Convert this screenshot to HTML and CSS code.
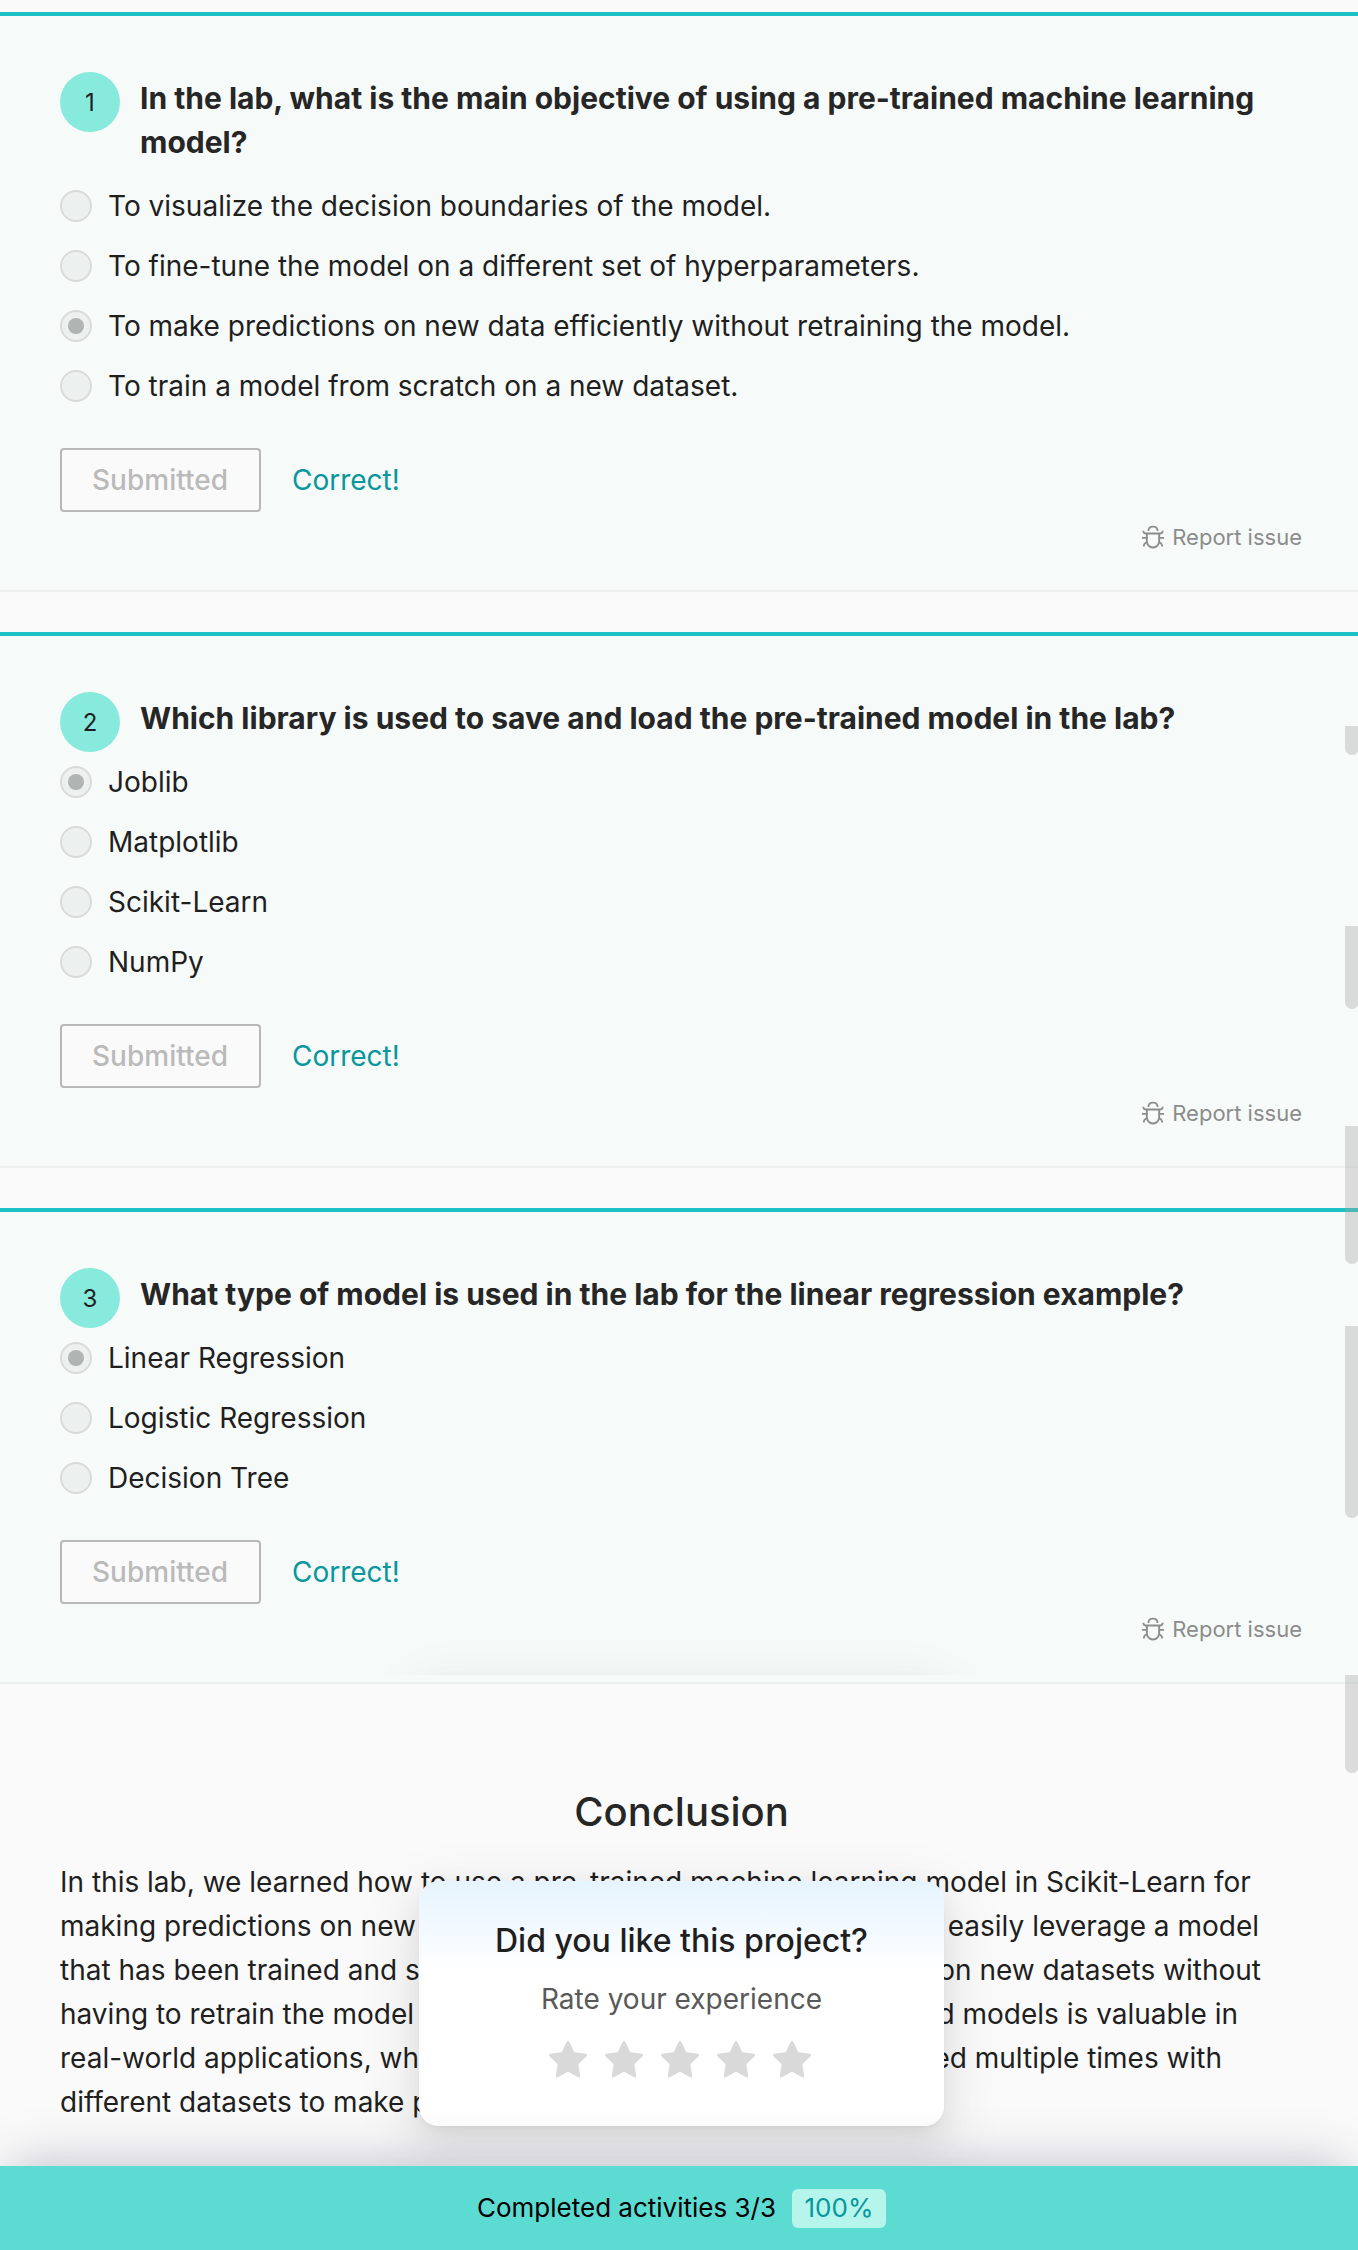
FILE: index.html
```html
<!DOCTYPE html>
<html lang="en">
<head>
<meta charset="utf-8">
<title>Lab quiz</title>
<link rel="stylesheet" href="styles.css">
</head>
<body>
<svg class="sprite" aria-hidden="true">
  <symbol id="bug" viewBox="0 0 1024 1024"><path d="M304 280h56c4.400 0 8-3.600 8-8 0-28.300 5.900-53.200 17.100-73.500 10.600-19.400 26-34.800 45.400-45.400C450.900 142 475.700 136 504 136h16c28.300 0 53.200 5.900 73.500 17.100 19.400 10.600 34.800 26 45.400 45.400C650 218.900 656 243.700 656 272c0 4.400 3.600 8 8 8h56c4.400 0 8-3.600 8-8 0-40-8.800-76.700-25.900-108.100a184.310 184.310 0 0 0-74-74C596.700 72.800 560 64 520 64h-16c-40 0-76.700 8.800-108.100 25.900a184.310 184.310 0 0 0-74 74C304.800 195.300 296 232 296 272c0 4.400 3.600 8 8 8z"/><path d="M940 512H792V412c76.800 0 139-62.200 139-139 0-4.400-3.600-8-8-8h-60c-4.400 0-8 3.600-8 8a63 63 0 0 1-63 63H232a63 63 0 0 1-63-63c0-4.400-3.600-8-8-8h-60c-4.400 0-8 3.600-8 8 0 76.800 62.200 139 139 139v100H84c-4.400 0-8 3.600-8 8v56c0 4.400 3.600 8 8 8h148v96c0 6.500.2 13 .7 19.300C164.100 728.600 116 796.700 116 876c0 4.400 3.600 8 8 8h56c4.400 0 8-3.600 8-8 0-44.200 23.900-82.900 59.600-103.700a273 273 0 0 0 22.700 49c24.300 41.500 59 76.200 100.500 100.500S460.500 960 512 960s99.800-13.900 141.300-38.200a281.380 281.380 0 0 0 123.200-149.500A120 120 0 0 1 836 876c0 4.400 3.600 8 8 8h56c4.400 0 8-3.600 8-8 0-79.300-48.100-147.400-116.700-176.700.4-6.400.7-12.800.7-19.300v-96h148c4.400 0 8-3.600 8-8v-56c0-4.400-3.600-8-8-8zM716 680c0 36.800-9.700 72-27.800 102.900-17.700 30.300-43 55.600-73.300 73.300C584 874.300 548.800 884 512 884s-72-9.700-102.900-27.800c-30.300-17.700-55.600-43-73.300-73.300A202.750 202.750 0 0 1 308 680V412h408v268z"/></symbol>
  <symbol id="star" viewBox="0 0 1024 1024"><path d="M908.100 353.100l-253.900-36.900L540.700 86.100c-3.100-6.300-8.200-11.400-14.500-14.500-15.800-7.800-35-1.300-42.900 14.500L369.800 316.200l-253.900 36.900c-7 1-13.400 4.300-18.300 9.300a32.050 32.050 0 0 0 .6 45.300l183.700 179.100-43.400 252.900a31.950 31.950 0 0 0 46.400 33.700L512 754l227.100 119.400c6.200 3.300 13.400 4.400 20.300 3.200 17.400-3 29.100-19.500 26.100-36.900l-43.400-252.900 183.700-179.100c5-4.900 8.300-11.300 9.300-18.300 2.700-17.500-9.500-33.700-27-36.300z"/></symbol>
</svg>
<main class="page">
  <section class="quiz">
    <header class="quiz-head"><span class="num">1</span><h3 class="question">In the lab, what is the main objective of using a pre-trained machine learning model?</h3></header>
    <ul class="options">
      <li class="option"><span class="radio"></span>To visualize the decision boundaries of the model.</li>
      <li class="option"><span class="radio"></span>To fine-tune the model on a different set of hyperparameters.</li>
      <li class="option"><span class="radio checked"></span>To make predictions on new data efficiently without retraining the model.</li>
      <li class="option"><span class="radio"></span>To train a model from scratch on a new dataset.</li>
    </ul>
    <div class="result"><button class="submit" disabled>Submitted</button><span class="verdict">Correct!</span></div>
    <div class="report"><svg class="bug"><use href="#bug"/></svg><span>Report issue</span></div>
  </section>
  <section class="quiz">
    <header class="quiz-head"><span class="num">2</span><h3 class="question">Which library is used to save and load the pre-trained model in the lab?</h3></header>
    <ul class="options">
      <li class="option"><span class="radio checked"></span>Joblib</li>
      <li class="option"><span class="radio"></span>Matplotlib</li>
      <li class="option"><span class="radio"></span>Scikit-Learn</li>
      <li class="option"><span class="radio"></span>NumPy</li>
    </ul>
    <div class="result"><button class="submit" disabled>Submitted</button><span class="verdict">Correct!</span></div>
    <div class="report"><svg class="bug"><use href="#bug"/></svg><span>Report issue</span></div>
  </section>
  <section class="quiz">
    <header class="quiz-head"><span class="num">3</span><h3 class="question">What type of model is used in the lab for the linear regression example?</h3></header>
    <ul class="options">
      <li class="option"><span class="radio checked"></span>Linear Regression</li>
      <li class="option"><span class="radio"></span>Logistic Regression</li>
      <li class="option"><span class="radio"></span>Decision Tree</li>
    </ul>
    <div class="result"><button class="submit" disabled>Submitted</button><span class="verdict">Correct!</span></div>
    <div class="report"><svg class="bug"><use href="#bug"/></svg><span>Report issue</span></div>
  </section>
  <section class="conclusion">
    <h2 class="conclusion-title">Conclusion</h2>
    <div class="prose">
      <p class="line">In this lab, we learned how to use a pre-trained machine learning model in Scikit-Learn for</p>
      <p class="line line-2"><span>making predictions on new</span><span>easily leverage a model</span></p>
      <p class="line line-3"><span>that has been trained and saved</span><span>on new datasets without</span></p>
      <p class="line line-4"><span>having to retrain the model</span><span>trained models is valuable in</span></p>
      <p class="line line-5"><span>real-world applications, where</span><span>used multiple times with</span></p>
      <p class="line">different datasets to make predictions.</p>
    </div>
  </section>

  <div class="shade"><div class="shade-box"></div></div>
  <i class="thumb thumb-1"></i><i class="thumb thumb-2"></i><i class="thumb thumb-3"></i><i class="thumb thumb-4"></i><i class="thumb thumb-5"></i>

  <aside class="rating">
    <h4 class="rating-title">Did you like this project?</h4>
    <p class="rating-hint">Rate your experience</p>
    <div class="stars"><svg class="star"><use href="#star"/></svg><svg class="star"><use href="#star"/></svg><svg class="star"><use href="#star"/></svg><svg class="star"><use href="#star"/></svg><svg class="star"><use href="#star"/></svg></div>
  </aside>
  <footer class="progress"><span>Completed activities 3/3</span><span class="percent">100%</span></footer>
</main>
</body>
</html>
```
FILE: styles.css
```css
* { box-sizing: border-box; margin: 0; padding: 0; }
body {
  background: #fafafa;
  color: #1f1f1f;
  font-family: Inter, "Liberation Sans", sans-serif;
  font-size: 28px;
  line-height: 44px;
}
.sprite { display: none; }
.page { position: relative; height: 2250px; padding-top: 12px; overflow: hidden; }

.quiz {
  background: #f6faf9;
  border-top: 4px solid #1bc2c1;
  border-bottom: 2px solid #eef0f0;
  padding: 56px 56px 34px 60px;
  margin-bottom: 40px;
}
.quiz-head { display: flex; align-items: flex-start; gap: 20px; padding-top: 4px; }
.num {
  flex: none;
  width: 60px;
  height: 60px;
  margin: -4px 0 -16px;
  border-radius: 50%;
  background: #87eadd;
  font-size: 24px;
  line-height: 61px;
  text-align: center;
}
.question { font-size: 30px; font-weight: 700; color: #262626; }
.options { list-style: none; padding-top: 12px; }
.option { display: flex; align-items: center; gap: 16px; height: 60px; }
.radio {
  display: flex;
  align-items: center;
  justify-content: center;
  width: 32px;
  height: 32px;
  border: 2px solid #d9dbda;
  border-radius: 50%;
  background: #ecf0ef;
}
.checked::after { content: ""; width: 16px; height: 16px; border-radius: 50%; background: #b0b4b3; }
.result { display: flex; align-items: center; gap: 31px; padding-top: 32px; }
.submit {
  width: 201px;
  height: 64px;
  padding-right: 1px;
  border: 2px solid #b8b8b8;
  border-radius: 4px;
  background: #fafafa;
  color: #bababa;
  font: 500 28px/44px Inter, "Liberation Sans", sans-serif;
}
.verdict { color: #08979c; }
.report {
  display: flex;
  align-items: center;
  justify-content: flex-end;
  gap: 6px;
  height: 38px;
  margin-top: 6px;
  color: #8c8c8c;
  font-size: 22px;
}
.bug { width: 26px; height: 26px; fill: currentColor; }

.conclusion { padding: 60px 55px 0 60px; }
.conclusion-title { color: #262626; font-size: 40px; font-weight: 500; line-height: 56px; text-align: center; }
.prose { padding-top: 20px; }
.line { display: flex; justify-content: space-between; white-space: nowrap; }
.line-2 { width: 1199px; }
.line-3 { width: 1201px; }
.line-4 { width: 1178px; }
.line-5 { width: 1162px; }

/* upper edge of the floating panel's shadow */
.shade { position: absolute; left: 300px; top: 1600px; width: 760px; height: 75px; overflow: hidden; }
.shade-box { width: 525px; height: 245px; margin: 79px 0 0 119px; border-radius: 20px; }
.shade-box, .rating {
  box-shadow: 0 12px 32px rgba(0, 0, 0, .08), 0 6px 12px -8px rgba(0, 0, 0, .12), 0 18px 56px 16px rgba(0, 0, 0, .06);
}
.thumb { position: absolute; left: 1345px; width: 14px; border-radius: 0 0 7px 7px; background: rgba(164, 164, 164, .36); }
.thumb-1 { top: 726px; height: 29px; }
.thumb-2 { top: 926px; height: 83px; }
.thumb-3 { top: 1126px; height: 138px; }
.thumb-4 { top: 1326px; height: 192px; }
.thumb-5 { top: 1675px; height: 98px; }

.rating {
  position: absolute;
  left: 419px;
  top: 1881px;
  width: 525px;
  height: 245px;
  padding-top: 38px;
  border-radius: 20px;
  background: linear-gradient(#e6f4ff, #fff 38%);
  text-align: center;
}
.rating-title { font-size: 32px; font-weight: 500; line-height: 44px; }
.rating-hint { margin-top: 14px; color: #595959; }
.stars { display: flex; justify-content: center; gap: 10px; margin: 17px 4px 0 0; }
.star { width: 46px; height: 46px; fill: #d9d9d9; }

.progress {
  position: absolute;
  left: 0;
  bottom: 0;
  width: 100%;
  height: 84px;
  display: flex;
  align-items: center;
  justify-content: center;
  gap: 16px;
  padding-left: 5px;
  background: #5cdbd3;
  color: #000;
  font-size: 26px;
  box-shadow: 0 -14px 54px -10px rgba(50, 50, 93, .22), 0 -8px 40px -14px rgba(0, 0, 0, .08);
}
.percent { width: 94px; height: 39px; line-height: 38px; text-align: center; border-radius: 6px; background: #b5f5ec; color: #08979c; }
```
